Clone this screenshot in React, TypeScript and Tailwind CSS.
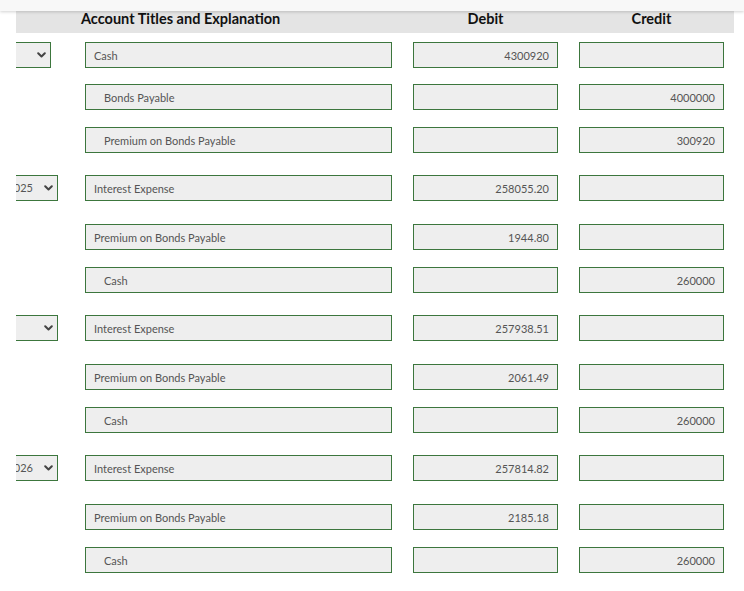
import React from "react";

type Row = { account: string; indent: boolean; debit: string; credit: string };
type Group = { date: string; selectRight: "narrow" | "wide"; rows: Row[] };

const groups: Group[] = [
  {
    date: "",
    selectRight: "narrow",
    rows: [
      { account: "Cash", indent: false, debit: "4300920", credit: "" },
      { account: "Bonds Payable", indent: true, debit: "", credit: "4000000" },
      { account: "Premium on Bonds Payable", indent: true, debit: "", credit: "300920" },
    ],
  },
  {
    date: "Dec. 31, 2025",
    selectRight: "wide",
    rows: [
      { account: "Interest Expense", indent: false, debit: "258055.20", credit: "" },
      { account: "Premium on Bonds Payable", indent: false, debit: "1944.80", credit: "" },
      { account: "Cash", indent: true, debit: "", credit: "260000" },
    ],
  },
  {
    date: "",
    selectRight: "wide",
    rows: [
      { account: "Interest Expense", indent: false, debit: "257938.51", credit: "" },
      { account: "Premium on Bonds Payable", indent: false, debit: "2061.49", credit: "" },
      { account: "Cash", indent: true, debit: "", credit: "260000" },
    ],
  },
  {
    date: "Dec. 31, 2026",
    selectRight: "wide",
    rows: [
      { account: "Interest Expense", indent: false, debit: "257814.82", credit: "" },
      { account: "Premium on Bonds Payable", indent: false, debit: "2185.18", credit: "" },
      { account: "Cash", indent: true, debit: "", credit: "260000" },
    ],
  },
];

const rowMargins = [
  ["mt-[9px]", "mt-[16px]", "mt-[17px]"],
  ["mt-[22px]", "mt-[23px]", "mt-[17px]"],
  ["mt-[22px]", "mt-[23px]", "mt-[17px]"],
  ["mt-[22px]", "mt-[23px]", "mt-[17px]"],
];

function Chevron() {
  return (
    <svg width="9" height="6" viewBox="0 0 9 6" className="shrink-0">
      <polyline
        points="1.2,1.2 4.5,4.5 7.8,1.2"
        fill="none"
        stroke="#444"
        strokeWidth="2"
        strokeLinecap="round"
        strokeLinejoin="round"
      />
    </svg>
  );
}

function DateSelect({ date, wide }: { date: string; wide: boolean }) {
  return (
    <div
      className={
        "flex h-[26px] w-[110px] shrink-0 items-center justify-end border border-[#3c763d] bg-[#eeeeee] pr-[4px] text-[11px] text-[#555] " +
        (wide ? "-ml-[68px]" : "-ml-[75px]")
      }
    >
      <span className="whitespace-nowrap">{date}</span>
      <span className={date ? "ml-[11px] flex" : "flex"}>
        <Chevron />
      </span>
    </div>
  );
}

function Field({
  value,
  className,
  align,
  indent,
}: {
  value: string;
  className: string;
  align: "left" | "right";
  indent?: boolean;
}) {
  return (
    <div
      className={
        "flex h-[26px] shrink-0 items-center border border-[#3c763d] bg-[#eeeeee] pt-[2px] text-[11px] text-[#555] " +
        className +
        (align === "right" ? " justify-end pr-[8px]" : indent ? " pl-[18px]" : " pl-[8px]")
      }
    >
      <span className="whitespace-nowrap">{value}</span>
    </div>
  );
}

export default function App() {
  return (
    <div
      className="min-h-[591px] w-[744px] overflow-hidden bg-white"
      style={{ fontFamily: "Lato, 'Open Sans', sans-serif" }}
    >
      <div className="relative z-10 h-[11px] w-full bg-[#f8f8f8] shadow-[0_1px_3px_rgba(0,0,0,0.18)]" />
      <div className="ml-[16px] w-[718px] overflow-hidden">
        <div className="flex h-[22px] items-start bg-[#e4e4e4] text-[14.5px] font-bold text-[#111]">
          <div className="w-[65px] shrink-0" />
          <div className="w-[332px] shrink-0 whitespace-nowrap leading-[15px]">Account Titles and Explanation</div>
          <div className="w-[145px] shrink-0 text-center leading-[15px]">Debit</div>
          <div className="w-[21px] shrink-0" />
          <div className="w-[145px] shrink-0 text-center leading-[15px]">Credit</div>
        </div>
        {groups.map((g, gi) => (
          <div key={gi} className="flex flex-col">
            {g.rows.map((r, ri) => (
              <div key={ri} className={"flex h-[26px] " + rowMargins[gi][ri]}>
                <div className="flex w-[69px] shrink-0">
                  {ri === 0 && <DateSelect date={g.date} wide={g.selectRight === "wide"} />}
                </div>
                <Field value={r.account} className="w-[307px]" align="left" indent={r.indent} />
                <div className="w-[21px] shrink-0" />
                <Field value={r.debit} className="w-[145px]" align="right" />
                <div className="w-[21px] shrink-0" />
                <Field value={r.credit} className="w-[145px]" align="right" />
              </div>
            ))}
          </div>
        ))}
      </div>
    </div>
  );
}
